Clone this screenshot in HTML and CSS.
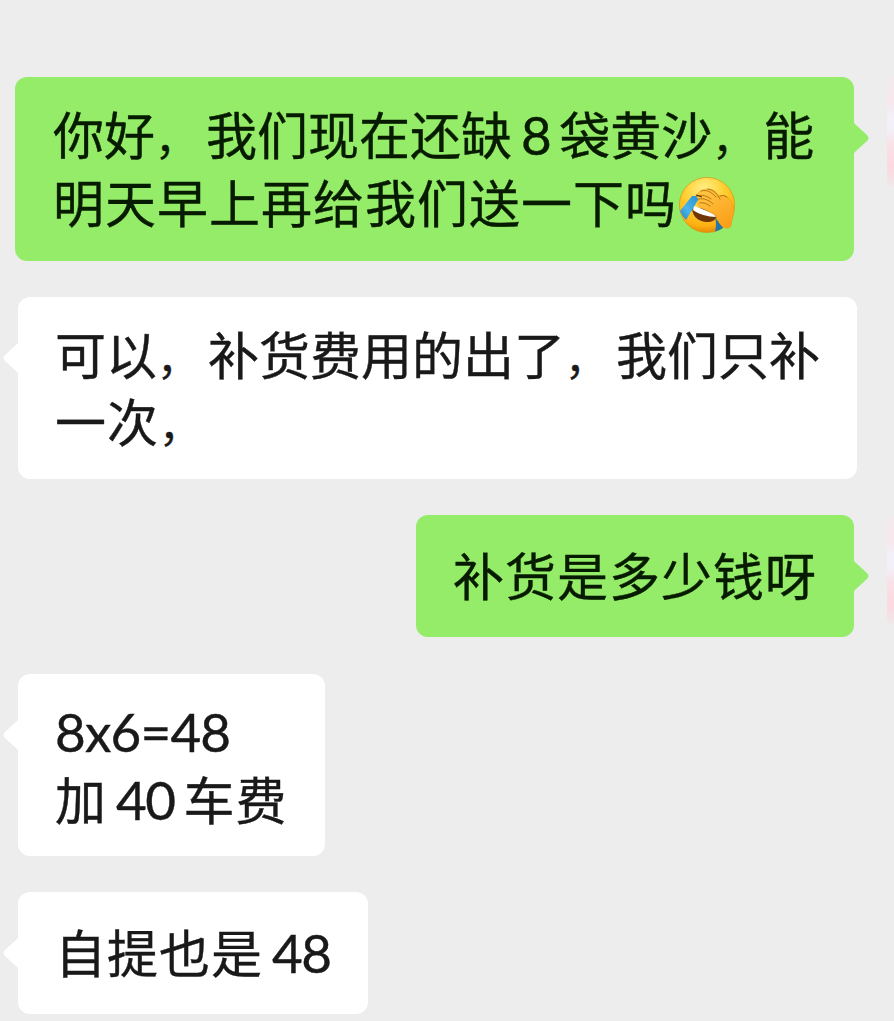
FILE: index.html
```html
<!DOCTYPE html>
<html lang="zh-CN">
  <head>
    <meta charset="UTF-8" />
    <meta name="viewport" content="width=device-width, initial-scale=1.0" />
    <title>聊天记录</title>
    <link rel="stylesheet" href="styles.css">
  </head>
  <body>
    <div class="chat">
      <div class="row mine">
        <div class="bubble double">
          <svg class="tail" viewBox="0 0 16 38"><path d="M0 0C0 3 1 4 3 6L14 16Q17 19 14 22L3 32C1 34 0 35 0 38Z" /></svg>
          <div class="line tight">你好<span class="comma">，</span>我们现在还缺<span class="num">8</span>袋黄沙<span class="comma">，</span>能</div>
          <div class="line">明天早上再给我们送一下吗<svg class="emoji" viewBox="0 0 56 56">
              <defs>
                <radialGradient id="face" cx="45%" cy="22%" r="78%">
                  <stop offset="0" stop-color="#fff08a" />
                  <stop offset="0.45" stop-color="#ffd034" />
                  <stop offset="0.85" stop-color="#fdb011" />
                  <stop offset="1" stop-color="#e58b06" />
                </radialGradient>
                <linearGradient id="hand" x1="0" y1="0" x2="0.6" y2="1">
                  <stop offset="0" stop-color="#ffcb48" />
                  <stop offset="1" stop-color="#fba01c" />
                </linearGradient>
                <linearGradient id="tear" x1="1" y1="0" x2="0" y2="1">
                  <stop offset="0" stop-color="#278fcb" />
                  <stop offset="0.6" stop-color="#48b5ec" />
                  <stop offset="1" stop-color="#2580b9" />
                </linearGradient>
              </defs>
              <circle cx="28" cy="28" r="27.6" fill="url(#face)" stroke="#dc930e" stroke-width="0.7" />
              <path d="M13 32C14 40 20 45 28 45C33 45 36 43 38 40L34 34L16 30Z" fill="#713505" />
              <path d="M15 29C21 31 29 34 35 37L37 40C29 40 19 37 14 33Z" fill="#fff" />
              <path d="M13 19L21 19L19 23L7 43Q3 39 1 34Z" fill="url(#tear)" />
              <path d="M36 40L44 51Q40 54 36 54.500Q38 48 36 40Z" fill="#2477a8" />
              <path d="M18 19C19 14 24 12 29 12C35 12 38 16 40 19C46 17 51 21 53 26C56 33 55 37 53 43L52 49C50 52 46 52 42 48C39 45 38 41 36 38C33 36 22 31 20 29C18 27 19 24 20 22C18 21 17 20 18 19Z" fill="url(#hand)" stroke="#e4900f" stroke-width="0.5" />
              <path d="M18 19C23 17 28 19 32 22M20 22C25 21 30 23 34 27M21 26C25 25 28 27 31 29M22 14C29 12 33 16 37 20M29 12C35 13 38 17 41 22M41 19Q45 17 48 20" fill="none" stroke="#a86008" stroke-width="0.8" stroke-linecap="round" />
              <path d="M17 18L23 20" stroke="#5b3005" stroke-width="1.300" />
            </svg></div>
        </div>
        <div class="avatar"></div>
      </div>

      <div class="row">
        <div class="bubble double">
          <svg class="tail" viewBox="0 0 16 38"><path d="M0 0C0 3 1 4 3 6L14 16Q17 19 14 22L3 32C1 34 0 35 0 38Z" /></svg>
          <div class="line tight">可以<span class="comma">，</span>补货费用的出了<span class="comma">，</span>我们只补</div>
          <div class="line">一次<span class="comma">，</span></div>
        </div>
      </div>

      <div class="row mine">
        <div class="bubble">
          <svg class="tail" viewBox="0 0 16 38"><path d="M0 0C0 3 1 4 3 6L14 16Q17 19 14 22L3 32C1 34 0 35 0 38Z" /></svg>
          <div class="line">补货是多少钱呀</div>
        </div>
        <div class="avatar"></div>
      </div>

      <div class="row later">
        <div class="bubble">
          <svg class="tail" viewBox="0 0 16 38"><path d="M0 0C0 3 1 4 3 6L14 16Q17 19 14 22L3 32C1 34 0 35 0 38Z" /></svg>
          <div class="line sum">8x6=48</div>
          <div class="line">加<span class="num">40</span>车费</div>
        </div>
      </div>

      <div class="row">
        <div class="bubble">
          <svg class="tail" viewBox="0 0 16 38"><path d="M0 0C0 3 1 4 3 6L14 16Q17 19 14 22L3 32C1 34 0 35 0 38Z" /></svg>
          <div class="line">自提也是<span class="num last">48</span></div>
        </div>
      </div>
    </div>
  </body>
</html>
```

FILE: styles.css
```css
* {
  box-sizing: border-box;
}

body {
  margin: 0;
  background-color: #ededed;
  font-family: "Noto Sans CJK SC", sans-serif;
  font-size: 51px;
  line-height: 67px;
  letter-spacing: 1px;
  color: #191919;
  overflow: hidden;
}

.chat {
  display: flex;
  flex-direction: column;
  gap: 36px;
  height: 1021px;
  padding-top: 77px;
}

.row {
  display: flex;
  align-items: flex-start;
  padding-left: 18px;
}

.mine {
  justify-content: flex-end;
  gap: 33px;
  padding-left: 0;
}

.later {
  margin-top: 1px;
}

.bubble {
  position: relative;
  min-height: 122px;
  padding: 26px 37px 29px;
  background-color: #fff;
  border-radius: 12px;
  -webkit-text-stroke: 0.4px;
}

.double {
  width: 839px;
  height: 182px;
  padding-top: 23px;
  padding-bottom: 0;
}

.later .bubble {
  padding-top: 24px;
  padding-bottom: 24px;
}

.mine .bubble {
  background-color: #95ec69;
  color: #071b00;
}

.mine .double {
  height: 184px;
  padding-top: 23px;
  padding-left: 38px;
}

.tail {
  position: absolute;
  left: -15px;
  top: 42px;
  width: 16px;
  height: 38px;
  fill: #fff;
  transform: scaleX(-1);
}

.mine .tail {
  left: auto;
  right: -15px;
  fill: #95ec69;
  transform: none;
}

.line {
  height: 67px;
  white-space: nowrap;
}

.mine .double .line {
  height: 68px;
}

.tight {
  letter-spacing: 0;
}

.comma {
  display: inline-block;
  width: 51px;
  font-size: 42px;
  line-height: 50px;
}

.num,
.sum {
  font-family: Lato, "Noto Sans CJK SC", sans-serif;
  font-size: 53px;
  letter-spacing: -1px;
}

.num {
  margin: 0 9px;
  letter-spacing: -1.5px;
  line-height: 60px;
}

.last {
  margin-right: 0;
}

.sum {
  letter-spacing: -0.8px;
}

.emoji {
  display: inline-block;
  width: 56px;
  height: 56px;
  margin-left: 2px;
  vertical-align: -10px;
}

/* only the left edge of the avatar is on screen */
.avatar {
  width: 7px;
  height: 110px;
  border-radius: 8px 0 0 8px;
  background: linear-gradient(#f2eaec 0, #f8e6ec 25px, #f3f0fa 40px, #f3f0fa 52px, #f8e2e8 66px, #fad9e1 90px, #f1e8ea 110px);
}
```
